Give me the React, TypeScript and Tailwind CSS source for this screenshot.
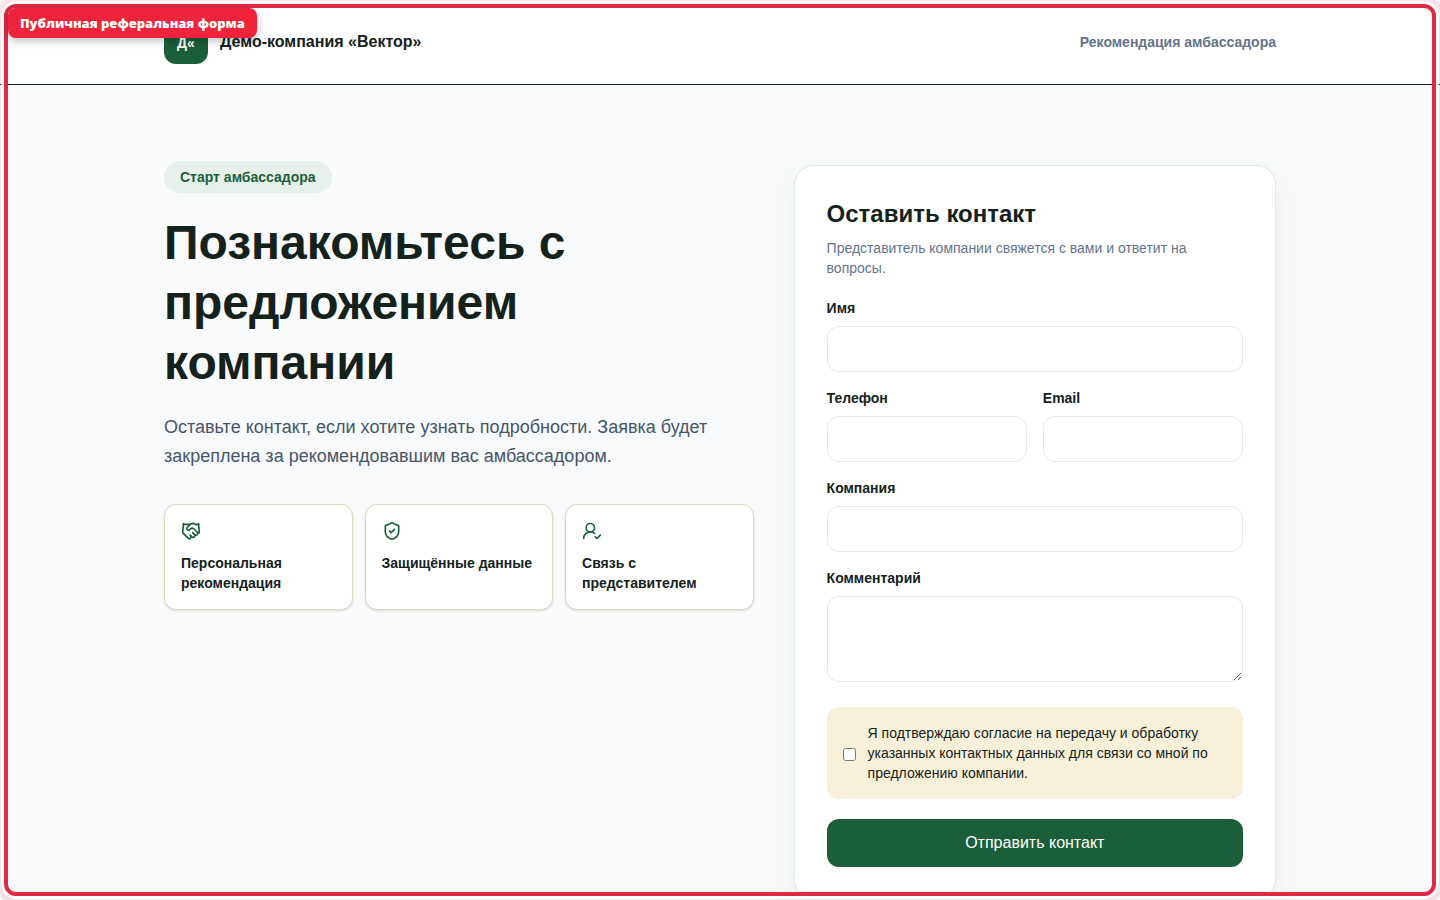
import { Handshake, ShieldCheck, UserRoundCheck } from "lucide-react";

const features = [
  { icon: Handshake, label: "Персональная рекомендация" },
  { icon: ShieldCheck, label: "Защищённые данные" },
  { icon: UserRoundCheck, label: "Связь с представителем" },
];

function Field({ label, type = "text" }: { label: string; type?: string }) {
  return (
    <label className="grid gap-2 text-sm leading-5 font-bold">
      {label}
      <input
        type={type}
        className="h-[46px] w-full rounded-xl border border-[#e5e7eb] bg-white px-3 font-normal outline-none"
      />
    </label>
  );
}

function Header() {
  return (
    <header className="border-b border-[#15221b] bg-white">
      <div className="mx-auto flex h-[84px] w-[1112px] items-center justify-between">
        <div className="flex items-center gap-3">
          <div className="flex size-11 items-center justify-center rounded-xl bg-[#1a5f3a] pt-0.5 text-sm font-bold text-white">
            Д«
          </div>
          <strong className="text-base leading-6">Демо-компания «Вектор»</strong>
        </div>
        <span className="text-sm font-bold text-[#64748b]">Рекомендация амбассадора</span>
      </div>
    </header>
  );
}

function Intro() {
  return (
    <section className="pt-[76px]">
      <span className="inline-flex h-8 items-center rounded-full bg-[#e8f0ec] px-4 text-sm font-bold text-[#1a5f3a]">
        Старт амбассадора
      </span>
      <h1 className="mt-5 w-[500px] text-5xl leading-[60px] font-bold">
        Познакомьтесь с предложением компании
      </h1>
      <p className="mt-5 text-lg leading-[29px] text-[#475569]">
        Оставьте контакт, если хотите узнать подробности. Заявка будет закреплена за
        рекомендовавшим вас амбассадором.
      </p>
      <div className="mt-[33px] grid grid-cols-3 gap-3">
        {features.map(({ icon: Icon, label }) => (
          <article
            key={label}
            className="h-[106px] rounded-xl border border-[#ded9b8] bg-white p-4 shadow-sm"
          >
            <Icon size={20} className="text-[#1a5f3a]" />
            <p className="mt-3 text-sm leading-5 font-bold">{label}</p>
          </article>
        ))}
      </div>
    </section>
  );
}

function ContactForm() {
  return (
    <form className="mt-20 h-[734px] rounded-[20px] border border-[#dfe9e5] bg-white px-8 pt-8 shadow-[0_12px_32px_rgba(15,23,42,0.06)]">
      <h2 className="text-2xl leading-8 font-bold">Оставить контакт</h2>
      <p className="mt-2 text-sm leading-5 text-[#64748b]">
        Представитель компании свяжется с вами и ответит на вопросы.
      </p>
      <div className="mt-5 grid gap-4">
        <Field label="Имя" />
        <div className="grid grid-cols-2 gap-4">
          <Field label="Телефон" type="tel" />
          <Field label="Email" type="email" />
        </div>
        <Field label="Компания" />
        <label className="grid gap-2 text-sm leading-5 font-bold">
          Комментарий
          <textarea className="block h-[86px] w-full resize-y rounded-xl border border-[#e5e7eb] bg-white p-3 font-normal outline-none" />
        </label>
      </div>
      <label className="mt-[25px] flex h-[92px] items-center gap-3 rounded-xl bg-[#f7f1d9] px-4 text-sm leading-5">
        <input type="checkbox" className="mt-[3px] size-[13px] shrink-0" />
        <span>
          Я подтверждаю согласие на передачу и обработку указанных контактных данных для связи со
          мной по предложению компании.
        </span>
      </label>
      <button
        type="button"
        className="mt-5 h-12 w-full rounded-xl bg-[#1a5f3a] text-base text-white"
      >
        Отправить контакт
      </button>
    </form>
  );
}

export default function App() {
  return (
    <div className="relative h-[900px] overflow-hidden bg-[#f8fafc] font-['Liberation_Sans',Arial,sans-serif] text-[#15221b]">
      <Header />
      <main className="mx-auto grid w-[1112px] grid-cols-[1.1fr_0.9fr] items-start gap-10">
        <Intro />
        <ContactForm />
      </main>
      <div className="pointer-events-none absolute inset-1 rounded-xl border-4 border-[#dc2c44] shadow-[0_0_0_3px_rgba(255,255,255,0.9),0_0_0_8px_rgba(220,44,68,0.12)]" />
      <div className="absolute top-2 left-2 flex h-[30px] w-[249px] items-center rounded-lg bg-[#ef233c] px-3 pt-px font-['Open_Sans',sans-serif] text-[13px] font-extrabold whitespace-nowrap text-white shadow-[0_3px_8px_rgba(0,0,0,0.25)]">
        Публичная реферальная форма
      </div>
    </div>
  );
}
